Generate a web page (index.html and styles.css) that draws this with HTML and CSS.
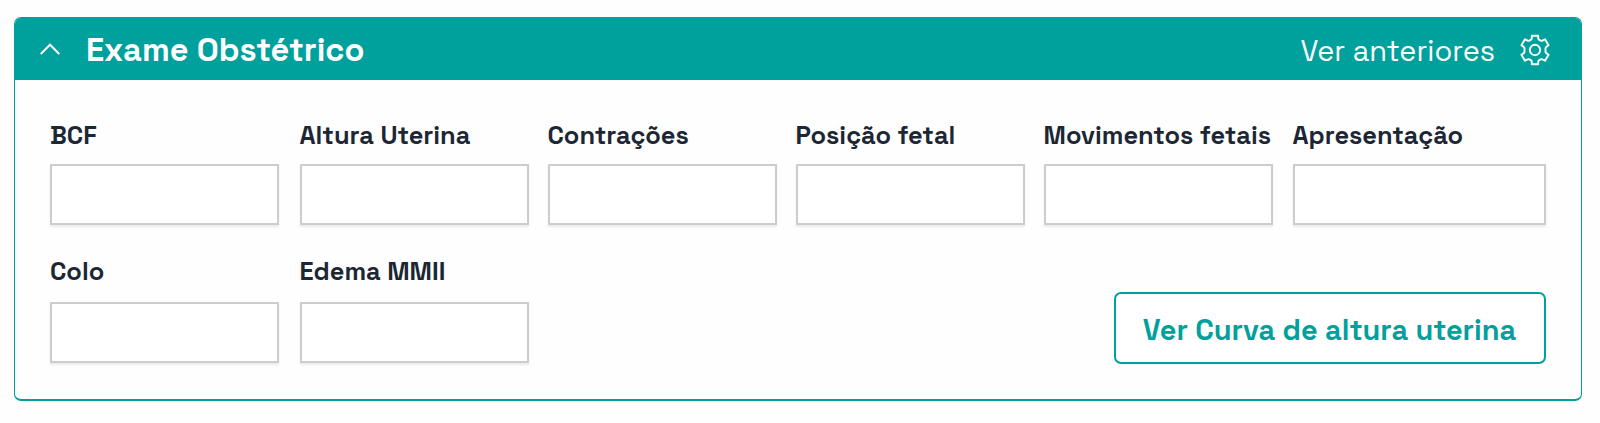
FILE: index.html
```html
<!DOCTYPE html>
<html lang="pt-BR">
<head>
  <meta charset="UTF-8">
  <title>Exame Obstétrico</title>
  <link rel="stylesheet" href="styles.css">
</head>
<body>

  <section class="card">
    <header class="card-header">
      <svg class="chevron" viewBox="0 0 20 12" fill="none" stroke="currentColor" stroke-width="2">
        <path d="M0.7 11 L10 1.7 L19.3 11"/>
      </svg>
      <h1 class="title">Exame Obstétrico</h1>
      <a class="previous">Ver anteriores</a>
      <svg class="gear" viewBox="0 0 30 32" fill="none" stroke="currentColor" stroke-width="1.9" stroke-linejoin="round">
        <path d="M11.8 1.7 H18.2 V4.6 Q18.4 5.4 19.2 5.8 L20.8 6.7 Q21.6 7.1 22.4 6.7 L25 5.3 L28.6 11.3 L26.2 12.9 Q25.5 13.4 25.5 14.2 V17.8 Q25.5 18.6 26.2 19.1 L28.6 20.7 L25 26.7 L22.4 25.3 Q21.6 24.9 20.8 25.3 L19.2 26.2 Q18.4 26.6 18.2 27.4 V30.3 H11.8 V27.4 Q11.6 26.6 10.8 26.2 L9.2 25.3 Q8.4 24.9 7.6 25.3 L5 26.7 L1.4 20.7 L3.8 19.1 Q4.5 18.6 4.5 17.8 V14.2 Q4.5 13.4 3.8 12.9 L1.4 11.3 L5 5.3 L7.6 6.7 Q8.4 7.1 9.2 6.7 L10.8 5.8 Q11.6 5.4 11.8 4.6 Z"/>
        <circle cx="15" cy="16" r="5.2"/>
      </svg>
    </header>

    <form class="card-body">
      <div class="fields">
        <div class="field">
          <label for="bcf">BCF</label>
          <input id="bcf" type="text">
        </div>
        <div class="field">
          <label for="altura">Altura Uterina</label>
          <input id="altura" type="text">
        </div>
        <div class="field">
          <label for="contracoes">Contrações</label>
          <input id="contracoes" type="text">
        </div>
        <div class="field">
          <label for="posicao">Posição fetal</label>
          <input id="posicao" type="text">
        </div>
        <div class="field">
          <label for="movimentos">Movimentos fetais</label>
          <input id="movimentos" type="text">
        </div>
        <div class="field field-wide">
          <label for="apresentacao">Apresentação</label>
          <input id="apresentacao" type="text">
        </div>
        <div class="field">
          <label for="colo">Colo</label>
          <input id="colo" type="text">
        </div>
        <div class="field">
          <label for="edema">Edema MMII</label>
          <input id="edema" type="text">
        </div>
        <div class="actions">
          <button class="curve" type="button">Ver Curva de altura uterina</button>
        </div>
      </div>
    </form>
  </section>

</body>
</html>
```
FILE: styles.css
```css
* {
  box-sizing: border-box;
}

body {
  margin: 0;
  padding: 17px 18px 0 14px;
  background: #fefefe;
  font-family: "Space Grotesk", Inter, sans-serif;
}

.card {
  height: 384px;
  border: 1.5px solid #00a19c;
  border-bottom-width: 2px;
  border-radius: 7px;
  overflow: hidden;
}

.card-header {
  display: flex;
  align-items: center;
  height: 62px;
  padding: 0 31px 0 25px;
  background: #00a19c;
  color: #fff;
}

.chevron {
  width: 20px;
  height: 12px;
  margin-right: 26px;
}

.title {
  margin: 2px auto 0 0;
  font-size: 32.6px;
  font-weight: 700;
}

.previous {
  margin: 4px 25px 0 0;
  font-size: 28.9px;
  font-weight: 400;
}

.gear {
  width: 30px;
  height: 32px;
  margin-top: 1px;
}

.card-body {
  padding: 39px 0 0 35px;
}

.fields {
  display: grid;
  grid-template-columns: 231.5px 230px 230px 230px 231px 253px;
  gap: 30px 18px;
}

.field {
  display: flex;
  flex-direction: column;
  gap: 13px;
  width: 229.4px;
}

.field-wide {
  width: 253px;
}

/* second row: a little more air between label and input */
.field-wide ~ .field {
  gap: 15px;
}

label {
  height: 32px;
  color: #1d2733;
  font-size: 25.4px;
  font-weight: 600;
  line-height: 32px;
  white-space: nowrap;
}

input {
  width: 100%;
  height: 61px;
  padding: 0 12px;
  border: 2px solid #cdcdcd;
  background: #fff;
  box-shadow: 0 2px 2px rgba(0, 0, 0, 0.08);
  font: inherit;
  font-size: 24px;
}

.actions {
  display: flex;
  grid-column: 3 / 7;
  justify-content: flex-end;
  align-items: flex-end;
}

.curve {
  width: 432px;
  height: 72px;
  margin-bottom: -1px;
  padding: 3px 0 0;
  border: 2px solid #00a19c;
  border-radius: 7px;
  background: #fff;
  color: #00a19c;
  font-family: inherit;
  font-size: 28.9px;
  font-weight: 600;
  white-space: nowrap;
}
```
